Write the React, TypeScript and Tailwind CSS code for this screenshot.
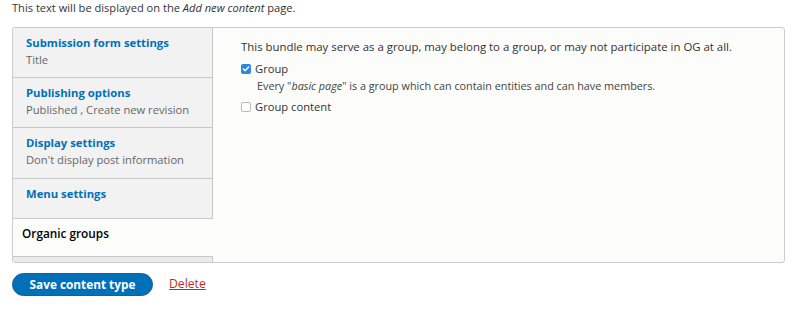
import { Check } from 'lucide-react'

const tabs = [
  { title: 'Submission form settings', summary: 'Title', h: 'h-[50px]' },
  { title: 'Publishing options', summary: 'Published , Create new revision', h: 'h-[50px]' },
  { title: 'Display settings', summary: "Don't display post information", h: 'h-[51px]' },
  { title: 'Menu settings', summary: '', h: 'h-[40px]' },
]

export default function App() {
  return (
    <div className="w-[800px] h-[311px] bg-white text-[#333] font-['Open_Sans',sans-serif] overflow-hidden">
      <p className="pl-3 pt-[1px] h-[27px] text-[11.1px] leading-[14px] text-[#333]">
        This text will be displayed on the <em>Add new content</em> page.
      </p>

      <div className="ml-3 w-[773px] h-[236px] flex border border-[#ccc] rounded-[3px] bg-[#fcfcfa] overflow-hidden">
        {/* Vertical tabs */}
        <div className="w-[200px] shrink-0 flex flex-col bg-[#f2f2f2]">
          {tabs.map((t) => (
            <div key={t.title} className={`${t.h} border-b border-r border-[#c8c8c8] pl-[13px] pt-[6px]`}>
              <div className="text-[#0071b8] font-bold text-[11.3px] leading-[17px]">{t.title}</div>
              {t.summary && <div className="text-[#666] text-[11.2px] leading-[17px]">{t.summary}</div>}
            </div>
          ))}
          <div className="h-[37px] bg-[#fcfcfa] pl-[9px] pt-[6px] text-black text-[11.8px] leading-[17px] font-semibold">
            Organic groups
          </div>
          <div className="flex-1 border-t border-r border-[#c8c8c8] bg-[#ebebeb]" />
        </div>

        {/* Panel */}
        <div className="flex-1 pl-[28px] pt-[11px] text-[11.4px] leading-[16px] text-[#333]">
          <p className="mb-[6px]">
            This bundle may serve as a group, may belong to a group, or may not participate in OG at all.
          </p>
          <label className="flex items-center gap-[4px] h-[16px]">
            <span className="w-[10px] h-[10px] rounded-[2px] bg-[#2e86de] flex items-center justify-center">
              <Check className="w-[8px] h-[8px] text-white" strokeWidth={4} />
            </span>
            <span className="text-[11.2px]">Group</span>
          </label>
          <p className="pl-[16px] mt-[1px] text-[10.8px] text-[#444]">
            Every "<em>basic page</em>" is a group which can contain entities and can have members.
          </p>
          <label className="flex items-center gap-[4px] h-[16px] mt-[5px]">
            <span className="w-[10px] h-[10px] rounded-[2px] border border-[#bbb] bg-white" />
            <span className="text-[11.2px]">Group content</span>
          </label>
        </div>
      </div>

      <div className="flex items-center mt-[10px] ml-3 gap-[16px]">
        <button className="h-[23px] w-[141px] rounded-full bg-[#0071b8] border border-[#1e5c90] text-white font-bold text-[11.8px]">
          Save content type
        </button>
        <a className="text-[#c72c1c] underline text-[12.2px]">Delete</a>
      </div>
    </div>
  )
}
